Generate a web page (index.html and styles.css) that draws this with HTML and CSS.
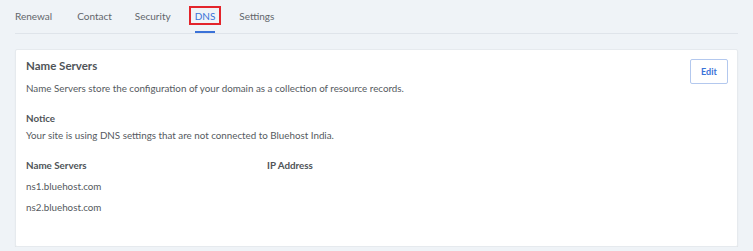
FILE: index.html
```html
<!DOCTYPE html>
<html lang="en">
<head>
    <meta charset="UTF-8">
    <title>Domain DNS</title>
    <link rel="stylesheet" href="styles.css">
</head>
<body>
    <div class="page">
        <nav class="tabs">
            <a class="tab">Renewal</a>
            <a class="tab">Contact</a>
            <a class="tab">Security</a>
            <a class="tab active"><span class="highlight">DNS</span></a>
            <a class="tab">Settings</a>
        </nav>
        <div class="card">
            <div class="card-head">
                <div>
                    <h2>Name Servers</h2>
                    <p class="desc">Name Servers store the configuration of your domain as a collection of resource records.</p>
                </div>
                <button class="edit-btn">Edit</button>
            </div>
            <div class="notice">
                <h4>Notice</h4>
                <p>Your site is using DNS settings that are not connected to Bluehost India.</p>
            </div>
            <div class="ns-table">
                <div class="col">
                    <div class="th">Name Servers</div>
                    <div class="td">ns1.bluehost.com</div>
                    <div class="td">ns2.bluehost.com</div>
                </div>
                <div class="col">
                    <div class="th">IP Address</div>
                </div>
            </div>
        </div>
    </div>
</body>
</html>
```

FILE: styles.css
```css
:root {
    --bg: #eff3f7; --text: #555a60; --muted: #62666b;
    --blue: #3a72d8; --line: #dfe4ea; --white: #ffffff;
}
body { margin: 0; font-family: Lato, 'Liberation Sans', sans-serif; background-color: var(--bg); color: var(--text); }
.page { padding: 0 15px 0 15px; width: 723px; }
.tabs { display: flex; gap: 23px; height: 33px; border-bottom: 1px solid var(--line); align-items: flex-start; }
.tab { font-size: 10px; color: var(--muted); padding-top: 10px; height: 22px; line-height: 12px; }
.tab:first-child { margin-right: 2px; }
.tab.active { color: var(--blue); border-bottom: 2px solid var(--blue); height: 21px; margin: 0 1px; }
.tab .highlight { outline: 2px solid #e3242b; padding: 2px 4px 1px; margin: 0 -4px; }
.card { margin-top: 15px; background: var(--white); border: 1px solid #e6eaee; border-radius: 2px; box-shadow: 0 1px 1px rgba(0, 0, 0, 0.08); padding: 8px 9px 0 10px; height: 188px; }
.card-head { display: flex; justify-content: space-between; }
.card-head h2 { margin: 1px 0 0; font-size: 11.5px; line-height: 14px; font-weight: 700; color: #4f5458; }
.desc { margin: 9px 0 0; font-size: 9.8px; line-height: 12px; }
.edit-btn { width: 38px; height: 25px; margin-top: 1px; border: 1px solid #b3c8ee; border-radius: 2px; background: var(--white); color: var(--blue); font-family: Lato, sans-serif; font-size: 9px; font-weight: 700; padding: 0; }
.notice { margin-top: 18px; }
.notice h4 { margin: 0; font-size: 9.8px; line-height: 12px; font-weight: 700; color: #4f5458; }
.notice p { margin: 5px 0 0; font-size: 9.8px; line-height: 12px; }
.ns-table { display: flex; margin-top: 18px; }
.col { width: 241px; }
.th { font-size: 9.8px; line-height: 12px; font-weight: 700; color: #4f5458; }
.td { font-size: 9.8px; line-height: 12px; margin-top: 9px; }
.td + .td { margin-top: 9px; }
```
